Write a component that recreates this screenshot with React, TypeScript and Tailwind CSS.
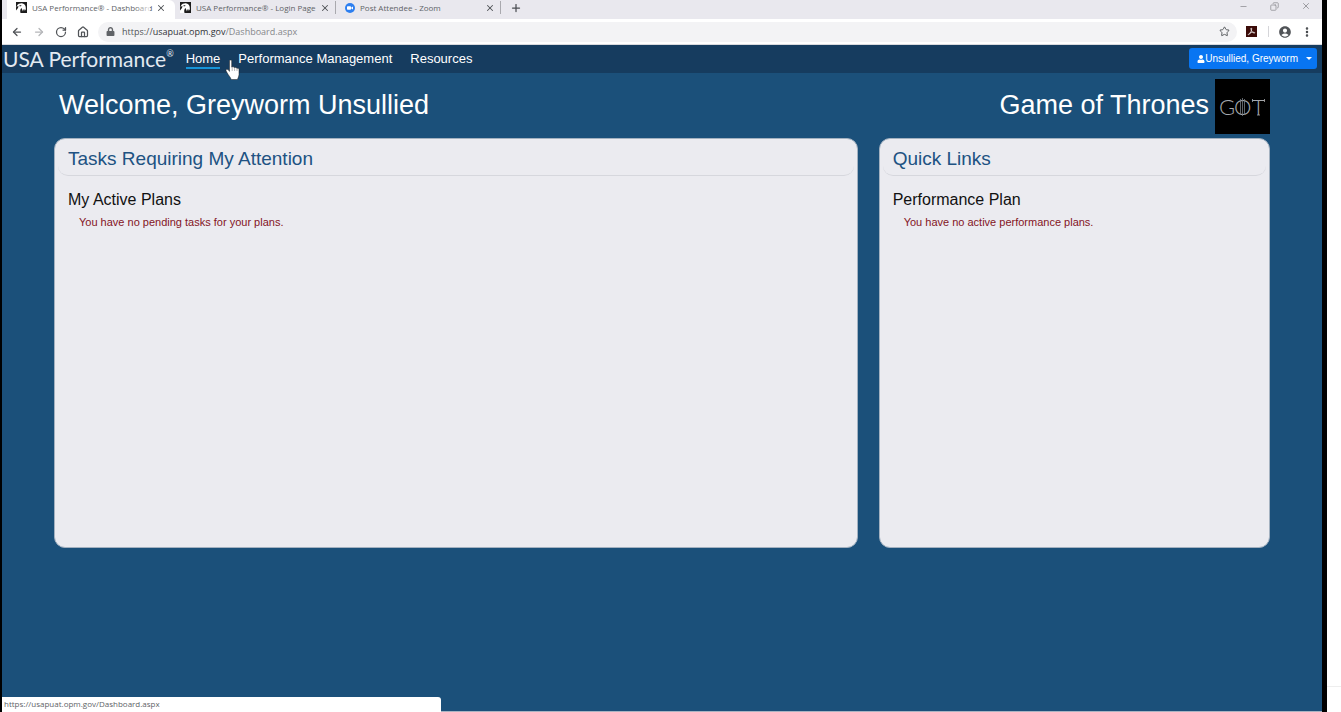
import React from "react";
import {
  ArrowLeft,
  ArrowRight,
  Copy,
  EllipsisVertical,
  House,
  Minus,
  Plus,
  RotateCw,
  Star,
  X,
} from "lucide-react";
import { FaLock, FaUser } from "react-icons/fa";
import { MdAccountCircle } from "react-icons/md";

function EagleIcon() {
  return (
    <svg viewBox="0 0 22 22" className="size-[11px] shrink-0" aria-hidden="true">
      <rect width="22" height="22" fill="#1c1c1c" />
      <path
        d="M0 22v-5l4-5 1-4-3 1-1 3C1 7 4 3 9 3c4-1 8 1 10 5 1 3 1 6 0 9l-2-3v4l-2-4-1 5-3-7c-3 2-3 6-2 10z"
        fill="#fff"
      />
      <path d="M7 6.500h4l-1 2H7z" fill="#1c1c1c" />
    </svg>
  );
}

function ZoomIcon() {
  return (
    <svg viewBox="0 0 20 20" className="size-[10px] shrink-0" aria-hidden="true">
      <circle cx="10" cy="10" r="10" fill="#2d7ff0" />
      <rect x="4" y="6.500" width="8" height="7" rx="1.500" fill="#fff" />
      <path d="M12.500 9.200 16 7v6l-3.500-2.200z" fill="#fff" />
    </svg>
  );
}

function AcrobatIcon() {
  return (
    <svg viewBox="0 0 22 22" className="size-[11px]" aria-hidden="true">
      <rect width="22" height="22" fill="#3b0b08" />
      <path
        d="M10.500 4c1.500 0 .8 4-.5 7-1.300 3-3.500 7-5 6.500-1.500-.8 2.500-3.800 6-4.600 3.500-.8 7-.4 6.500.9-.5 1.400-4-.8-5.500-2.800C10 8.500 9.300 4 10.500 4z"
        fill="none"
        stroke="#fff"
        strokeWidth="1.500"
      />
    </svg>
  );
}

function OrganizationLogo() {
  return (
    <svg viewBox="0 0 55 55" className="size-[55px] bg-black" role="img" aria-label="GOT">
      <g fill="#a4a8ad" fontFamily="Lato, sans-serif" fontWeight="300" fontSize="22">
        <text x="4" y="36">G</text>
        <text x="19" y="36">O</text>
        <text x="37" y="36">T</text>
      </g>
      <path d="M25.500 20v16M27.500 19v18M29.500 20v16" stroke="#777d84" strokeWidth="0.8" />
      <path d="M37.500 20v3M49.500 20v3M42 36h3" stroke="#a4a8ad" strokeWidth="0.8" />
    </svg>
  );
}

function HandCursor() {
  return (
    <svg viewBox="0 0 16 22" className="absolute left-[223px] top-[59px] h-[22px] w-4" aria-hidden="true">
      <path
        d="M4.500 1.800c0-1 2.200-1 2.200 0v6.400l.5.100c.3-.8 2-.6 2.100.4l.4.100c.4-.7 1.900-.4 2 .5l.5.200c.5-.5 1.800-.1 1.800.9v5.200c0 1.900-1 3-1.500 4.900H6.200c-.7-2.400-2.700-4-4.200-6.900-.7-1.400-1.500-2.300-.7-3 .9-.8 2.300.3 3.200 1.800z"
        fill="#fff"
        stroke="#222"
        strokeWidth="0.5"
      />
      <path d="M7.200 9v3M9.600 9.300V12M12 10v2" stroke="#888" strokeWidth="0.6" />
    </svg>
  );
}

function TabTitle({ icon, title }: { icon: React.ReactNode; title: string }) {
  return (
    <>
      {icon}
      <span className="ml-[5px] flex-1 whitespace-nowrap">{title}</span>
      <button type="button" aria-label={`Close ${title}`}>
        <X className="size-[10px] text-[#505357]" strokeWidth={2.5} />
      </button>
    </>
  );
}

function BrowserChrome() {
  return (
    <div className="font-['Open_Sans',sans-serif] text-[#606367]">
      <div className="flex h-[19px] items-stretch bg-[#e9e8ee] text-[8px] leading-[15px]">
        <div className="relative ml-[5px] flex w-[168px] items-center rounded-tr-md bg-white pb-1 pl-[9px] pr-[9px]">
          <TabTitle icon={<EagleIcon />} title="USA Performance® - Dashboard" />
          <span className="absolute right-[25px] top-0 h-[15px] w-4 bg-linear-to-r from-transparent to-white/80" />
        </div>
        <div className="flex w-[160px] items-center pb-1 pl-[5px] pr-[5px]">
          <TabTitle icon={<EagleIcon />} title="USA Performance® - Login Page" />
        </div>
        <span className="mt-px h-[13px] w-px bg-[#a9a9ae]" />
        <div className="flex w-[164px] items-center pb-1 pl-[9px] pr-[5px]">
          <TabTitle icon={<ZoomIcon />} title="Post Attendee - Zoom" />
        </div>
        <span className="mt-px h-[13px] w-px bg-[#a9a9ae]" />
        <button type="button" aria-label="New tab" className="ml-[9px] pb-1">
          <Plus className="size-3 text-[#4b4e52]" strokeWidth={2.5} />
        </button>
        <div className="ml-auto flex items-center gap-[22px] pb-[7px] pr-[11px] text-[#8b8b90]">
          <button type="button" aria-label="Minimize"><Minus className="size-[9px]" /></button>
          <button type="button" aria-label="Restore"><Copy className="size-[9px] -scale-x-100" /></button>
          <button type="button" aria-label="Close window"><X className="size-[10px]" /></button>
        </div>
      </div>
      <div className="flex h-[26px] items-center border-b border-[#d9dade] bg-white pl-[9px] pr-[9px]">
        <div className="flex items-center gap-[10px] text-[#505357]">
          <button type="button" aria-label="Back"><ArrowLeft className="size-3" strokeWidth={2.5} /></button>
          <button type="button" aria-label="Forward"><ArrowRight className="size-3 text-[#b5b6b9]" strokeWidth={2.5} /></button>
          <button type="button" aria-label="Reload"><RotateCw className="size-3" strokeWidth={2.5} /></button>
          <button type="button" aria-label="Home page"><House className="size-3" strokeWidth={2.5} /></button>
        </div>
        <div className="ml-[9px] flex h-5 flex-1 items-center rounded-full bg-[#f3f3f5] pl-2 pr-[7px]">
          <FaLock className="size-[9px] text-[#606367]" />
          <span className="ml-[7px] flex-1 text-[9px] text-[#85878b]">
            <span className="text-[#505357]">https://</span>
            <span className="text-[#303236]">usapuat.opm.gov</span>/Dashboard.aspx
          </span>
          <button type="button" aria-label="Bookmark"><Star className="size-[11px] text-[#505357]" /></button>
        </div>
        <div className="ml-[9px] flex items-center">
          <button type="button" aria-label="Acrobat"><AcrobatIcon /></button>
          <span className="ml-[11px] mr-[9px] h-[11px] w-px bg-[#d5d5d9]" />
          <button type="button" aria-label="Profile"><MdAccountCircle className="size-[14px] text-[#505357]" /></button>
          <button type="button" aria-label="Menu" className="ml-[9px]"><EllipsisVertical className="size-3 text-[#404347]" strokeWidth={3} /></button>
        </div>
      </div>
    </div>
  );
}

function SiteNav() {
  return (
    <header className="flex h-7 items-center bg-[#163c5f] pb-px pr-[5px] text-white">
      <a href="#" className="ml-px flex whitespace-nowrap font-['Lato',sans-serif] text-[21px] leading-7 text-[#e3eaf1]">
        USA Performance<span className="text-[9px] leading-[18px]">®</span>
      </a>
      <nav className="ml-3 flex items-center gap-[18px] text-[13px] leading-[17px]">
        <a href="#" className="border-b-2 border-[#1794d8] pt-[2px]">Home</a>
        <a href="#" className="whitespace-nowrap">Performance Management</a>
        <a href="#">Resources</a>
      </nav>
      <button type="button" className="ml-auto flex h-[21px] items-center rounded-[3px] bg-[#0875f2] pl-2 pr-[5px] text-[10px]">
        <FaUser className="size-2" />
        <span>Unsullied, Greyworm</span>
        <span className="ml-2 border-x-[3px] border-t-[3px] border-x-transparent border-t-white" />
      </button>
    </header>
  );
}

type PanelProps = { title: string; heading: string; message: string; className: string };

function Panel({ title, heading, message, className }: PanelProps) {
  return (
    <section className={`min-h-[410px] rounded-[11px] border border-[#a3b1c0] bg-[#ebebf0] ${className}`}>
      <h2 className="mx-[3px] h-[37px] rounded-b-[10px] border-b border-[#d6d7dd] pl-[10px] text-[19px] leading-[40px] text-[#205282]">
        {title}
      </h2>
      <h3 className="mt-[13px] pl-[13px] text-[16px] leading-[22px] text-[#111]">{heading}</h3>
      <p className="mt-[3px] pl-6 text-[11px] leading-4 text-[#84141e]">{message}</p>
    </section>
  );
}

export default function App() {
  return (
    <div className="flex min-h-screen bg-white font-['Liberation_Sans',Arial,sans-serif]">
      <div className="relative flex flex-1 flex-col border-l-2 border-r-[5px] border-black">
        <BrowserChrome />
        <div className="flex flex-1 flex-col border-b border-[#a9b4c2] bg-[#1b507a]">
          <SiteNav />
          <main className="px-[52px] pt-[6px]">
            <div className="flex items-center justify-between text-[27px] text-white">
              <h1 className="pb-[2px] pl-[5px]">Welcome, Greyworm Unsullied</h1>
              <div className="flex items-center gap-[6px]">
                <span className="pb-[2px]">Game of Thrones</span>
                <OrganizationLogo />
              </div>
            </div>
            <div className="mt-1 grid grid-cols-12 gap-[21px]">
              <Panel
                className="col-span-8"
                title="Tasks Requiring My Attention"
                heading="My Active Plans"
                message="You have no pending tasks for your plans."
              />
              <Panel
                className="col-span-4"
                title="Quick Links"
                heading="Performance Plan"
                message="You have no active performance plans."
              />
            </div>
          </main>
        </div>
        <div className="absolute bottom-0 left-0 h-[15px] w-[439px] rounded-tr-[3px] bg-white pl-[2px] font-['Open_Sans',sans-serif] text-[8px] leading-[14px] text-[#606367]">
          https://usapuat.opm.gov/Dashboard.aspx
        </div>
        <HandCursor />
      </div>
      <div className="flex w-[14px] flex-col justify-end pb-[25px]">
        <span className="h-px bg-[#eeeeee]" />
      </div>
    </div>
  );
}
